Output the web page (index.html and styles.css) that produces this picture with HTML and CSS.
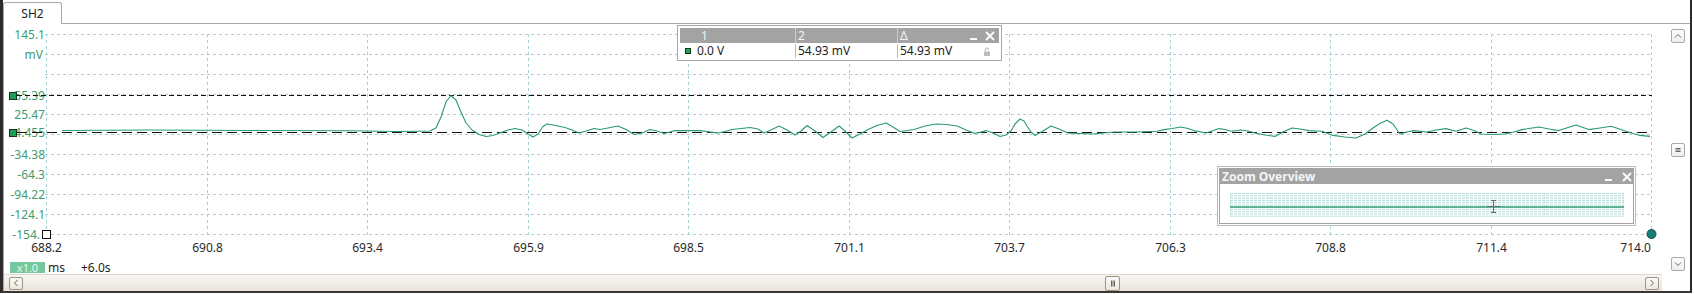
FILE: index.html
```html
<!DOCTYPE html>
<html lang="en">
<head>
    <meta charset="UTF-8">
    <meta name="viewport" content="width=device-width, initial-scale=1.0">
    <title>SH2</title>
    <link rel="stylesheet" href="styles.css">
</head>
<body>
<div class="window">
    <div class="tabs"><div class="tab">SH2</div></div>
    <div class="page">
        <div class="main">
            <div class="plot">
                <svg class="chart" width="1667" height="236" viewBox="4 24 1667 236">
                    <g class="hgrid">
                        <line x1="45" x2="1652" y1="34.5" y2="34.5"/>
                        <line x1="45" x2="1652" y1="54.5" y2="54.5"/>
                        <line x1="45" x2="1652" y1="74.5" y2="74.5"/>
                        <line x1="45" x2="1652" y1="94.5" y2="94.5"/>
                        <line x1="45" x2="1652" y1="114.5" y2="114.5"/>
                        <line x1="45" x2="1652" y1="134.5" y2="134.5"/>
                        <line x1="45" x2="1652" y1="154.5" y2="154.5"/>
                        <line x1="45" x2="1652" y1="174.5" y2="174.5"/>
                        <line x1="45" x2="1652" y1="194.5" y2="194.5"/>
                        <line x1="45" x2="1652" y1="214.5" y2="214.5"/>
                        <line x1="45" x2="1652" y1="234.5" y2="234.5"/>
                    </g>
                    <g class="vgrid">
                        <line x1="46.5" x2="46.5" y1="34" y2="235"/>
                        <line x1="207.5" x2="207.5" y1="34" y2="235"/>
                        <line x1="367.5" x2="367.5" y1="34" y2="235"/>
                        <line x1="528.5" x2="528.5" y1="34" y2="235"/>
                        <line x1="688.5" x2="688.5" y1="34" y2="235"/>
                        <line x1="849.5" x2="849.5" y1="34" y2="235"/>
                        <line x1="1009.5" x2="1009.5" y1="34" y2="235"/>
                        <line x1="1170.5" x2="1170.5" y1="34" y2="235"/>
                        <line x1="1330.5" x2="1330.5" y1="34" y2="235"/>
                        <line x1="1491.5" x2="1491.5" y1="34" y2="235"/>
                        <line x1="1651.5" x2="1651.5" y1="34" y2="235"/>
                    </g>
                    <g class="ylabels">
                        <text x="45" y="39">145.1</text>
                        <text x="43" y="59">mV</text>
                        <text x="45" y="100">55.39</text>
                        <text x="45" y="119">25.47</text>
                        <text x="45" y="137">-4.455</text>
                        <text x="45" y="159">-34.38</text>
                        <text x="45" y="179">-64.3</text>
                        <text x="45" y="199">-94.22</text>
                        <text x="45" y="219">-124.1</text>
                        <text x="40" y="239">-154.</text>
                    </g>
                    <g class="xlabels">
                        <text x="46.5" y="252">688.2</text>
                        <text x="207.5" y="252">690.8</text>
                        <text x="367.5" y="252">693.4</text>
                        <text x="528.5" y="252">695.9</text>
                        <text x="688.5" y="252">698.5</text>
                        <text x="849.5" y="252">701.1</text>
                        <text x="1009.5" y="252">703.7</text>
                        <text x="1170.5" y="252">706.3</text>
                        <text x="1330.5" y="252">708.8</text>
                        <text x="1491.5" y="252">711.4</text>
                        <text class="last" x="1651" y="252">714.0</text>
                    </g>
                    <line class="cursor2" x1="17" x2="1652" y1="95.5" y2="95.5"/>
                    <line class="cursor1" x1="17" x2="1652" y1="132.5" y2="132.5"/>
                    <polyline class="wave" points="62,130.5 150,130 250,130.5 350,130.8 395,131.5 420,131.3 430,131 436,128 441,117 446,102 451,95.5 456,100 461,112 466,123 472,130 479,134.5 486,136.5 493,135.5 501,132.5 508,130 515,128.5 522,130 528,134 533,137 538,134 543,126.5 547,124 553,125 565,127.5 572,130 579,133 586,131 594,128.5 600,129.5 608,128 618,126 626,129.5 634,134.5 642,133 650,129.5 657,131 664,133.5 670,132 675,130.6 700,130.6 710,132 718,133 725,131.5 732,129.5 750,127.5 758,129 764,133 771,130 779,126 787,130 795,135 801,131 807,125.5 815,131 823,137.5 831,132 839,126 845,131 852,138 860,134 868,129.5 877,125.5 886,123 893,127 900,131.5 907,130.5 914,129.5 925,126 936,124 947,124.5 957,126 966,130 975,133.5 981,132 986,130.6 993,133 1000,136.5 1006,135 1011,131 1015,124 1020,119 1024,121 1027,126 1031,132 1035,135.5 1043,131 1051,126 1059,129 1068,133 1080,133.5 1093,134 1114,132 1136,132 1157,131.3 1164,129.6 1172,128.5 1181,127 1188,128.5 1194,130.6 1206,133 1212,131 1219,128.6 1225,129.5 1231,131.3 1241,130 1248,131 1255,133 1265,135 1275,136.4 1283,132 1292,128 1300,129 1309,130.6 1322,131.3 1333,135.4 1345,137 1356,138 1365,134 1373,128 1380,123.5 1387,120.2 1393,124 1400,134 1407,132 1414,130.6 1427,132 1436,130 1446,128.6 1456,131.3 1466,128 1474,130.5 1481,134 1493,134.5 1505,134 1514,132 1522,129.6 1539,127 1549,129 1559,130.6 1568,127.5 1576,124.9 1583,127.5 1589,129.6 1600,128 1611,126.3 1618,128.5 1626,131.3 1633,133.5 1640,135.4 1650,136.4"/>
                    <rect class="marker" x="9.5" y="92.5" width="7" height="7"/>
                    <rect class="marker" x="9.5" y="129.5" width="7" height="7"/>
                    <rect class="origin" x="42.5" y="230.5" width="8" height="8"/>
                    <circle class="end" cx="1651.5" cy="234" r="4.5"/>
                </svg>
                <div class="info">
                    <span class="badge">x1.0</span>
                    <span class="unit">ms</span>
                    <span class="offset">+6.0s</span>
                </div>

                <div class="meas">
                    <div class="meas-head">
                        <span class="c0"></span>
                        <span class="c1">1</span>
                        <span class="c2">2</span>
                        <span class="c3">Δ</span>
                        <span class="ctl">
                            <i class="min"></i>
                            <svg class="close" width="10" height="10" viewBox="0 0 10 10"><path d="M1 1L9 9M9 1L1 9"/></svg>
                        </span>
                    </div>
                    <div class="meas-row">
                        <span class="c0"><i class="swatch"></i></span>
                        <span class="c1">0.0 V</span>
                        <span class="c2">54.93 mV</span>
                        <span class="c3">54.93 mV</span>
                        <span class="ctl">
                            <svg class="lock" width="6" height="9" viewBox="0 0 6 9"><path class="shackle" d="M1.5 4.5V2.5a1.5 1.5 0 0 1 3 0V3"/><rect x="0" y="4.5" width="6" height="4.5"/></svg>
                        </span>
                    </div>
                </div>

                <div class="overview">
                    <div class="ov-frame">
                        <div class="ov-head">
                            <span>Zoom Overview</span>
                            <span class="ctl">
                                <i class="min"></i>
                                <svg class="close" width="10" height="10" viewBox="0 0 10 10"><path d="M1 1L9 9M9 1L1 9"/></svg>
                            </span>
                        </div>
                        <div class="ov-body">
                            <svg class="mini" width="394" height="25" viewBox="0 0 394 25">
                                <g class="mgrid">
                                    <line x1="0" x2="394" y1="0.5" y2="0.5"/>
                                    <line x1="0" x2="394" y1="2.8" y2="2.8"/>
                                    <line x1="0" x2="394" y1="5.1" y2="5.1"/>
                                    <line x1="0" x2="394" y1="7.4" y2="7.4"/>
                                    <line x1="0" x2="394" y1="9.7" y2="9.7"/>
                                    <line x1="0" x2="394" y1="12" y2="12"/>
                                    <line x1="0" x2="394" y1="16.3" y2="16.3"/>
                                    <line x1="0" x2="394" y1="18.6" y2="18.6"/>
                                    <line x1="0" x2="394" y1="20.9" y2="20.9"/>
                                    <line x1="0" x2="394" y1="23.2" y2="23.2"/>
                                </g>
                                <g class="mcols">
                                    <line x1="0.5" x2="0.5" y1="0" y2="24"/>
                                    <line x1="39.8" x2="39.8" y1="0" y2="24"/>
                                    <line x1="118.4" x2="118.4" y1="0" y2="24"/>
                                    <line x1="236.3" x2="236.3" y1="0" y2="24"/>
                                    <line x1="314.9" x2="314.9" y1="0" y2="24"/>
                                    <line x1="393.5" x2="393.5" y1="0" y2="24"/>
                                </g>
                                <line class="mwave" x1="0" x2="394" y1="14" y2="14"/>
                                <path class="move" d="M263.5 7.5v12M261 7.5h5M261 19.5h5M257 13.5h13"/>
                            </svg>
                        </div>
                    </div>
                </div>
            </div>
            <div class="vscroll">
                <div class="vbtn"><svg width="8" height="6" viewBox="0 0 8 6"><path d="M1 4.5L4 1.5L7 4.5"/></svg></div>
                <div class="vbtn"><svg width="8" height="6" viewBox="0 0 8 6"><path d="M1.5 1.5H6.5M1.5 3H6.5M1.5 4.5H6.5"/></svg></div>
                <div class="vbtn"><svg width="8" height="6" viewBox="0 0 8 6"><path d="M1 1.5L4 4.5L7 1.5"/></svg></div>
            </div>
        </div>
        <div class="hscroll">
            <div class="htrack">
                <div class="hbtn"><svg width="6" height="8" viewBox="0 0 6 8"><path d="M4.5 1L1.5 4L4.5 7"/></svg></div>
                <div class="hbtn thumb" style="margin-left: 1082px"><svg width="6" height="7" viewBox="0 0 6 7"><path d="M1.5 0.5V6.5M3 0.5V6.5M4.5 0.5V6.5"/></svg></div>
                <div class="hbtn end"><svg width="6" height="8" viewBox="0 0 6 8"><path d="M1.5 1L4.5 4L1.5 7"/></svg></div>
            </div>
            <div class="corner"></div>
        </div>
    </div>
</div>
</body>
</html>
```

FILE: styles.css
```css
body {
    margin: 0;
    background: #fff;
    font-family: "Noto Sans", "Liberation Sans", sans-serif;
    font-size: 12px;
    color: #1e1e1e;
}
.window {
    width: 1692px;
    height: 293px;
    box-sizing: border-box;
    border-left: 3px solid #2b2b2b;
    border-right: 2px solid #2b2b2b;
    border-bottom: 2px solid #3b3631;
    display: flex;
    flex-direction: column;
}
.tabs {
    height: 24px;
    box-sizing: border-box;
    border-bottom: 1px solid #a9a9a9;
    display: flex;
    align-items: flex-end;
}
.tab {
    width: 59px;
    height: 22px;
    margin-bottom: -1px;
    box-sizing: border-box;
    border: 1px solid #a9a9a9;
    border-bottom: none;
    border-radius: 3px 3px 0 0;
    background: #fff;
    text-align: center;
    line-height: 21px;
}
.page {
    flex: 1;
    display: flex;
    flex-direction: column;
    border-left: 1px solid #a9a9a9;
}
.main {
    height: 250px;
    display: flex;
}
.plot {
    flex: 1;
    position: relative;
    display: flex;
    flex-direction: column;
}
.chart {
    display: block;
}
.chart text {
    font-family: "Noto Sans", "Liberation Sans", sans-serif;
    font-size: 12px;
}
.hgrid line {
    stroke: #b6c9d6;
    stroke-dasharray: 3 3;
}
.vgrid line {
    stroke: #a6d2d9;
    stroke-dasharray: 3 3;
}
.ylabels text {
    fill: #3f9c6e;
    text-anchor: end;
}
.xlabels text {
    fill: #2a2a2a;
    text-anchor: middle;
}
.xlabels .last {
    text-anchor: end;
}
.cursor2 {
    stroke: #111;
    stroke-dasharray: 5 3;
}
.cursor1 {
    stroke: #111;
    stroke-dasharray: 10 5;
}
.wave {
    fill: none;
    stroke: #2a9a72;
    stroke-width: 1.1;
    stroke-linejoin: round;
}
.marker {
    fill: #1f9c55;
    stroke: #12351f;
}
.origin {
    fill: #fff;
    stroke: #111;
}
.end {
    fill: #177c79;
    stroke: #0d4b48;
}
.info {
    height: 14px;
    display: flex;
    align-items: flex-start;
    padding-left: 6px;
    line-height: 13px;
}
.badge {
    width: 35px;
    height: 11px;
    margin-top: 2px;
    background: #74c89e;
    color: #e4f5ec;
    font-size: 11px;
    line-height: 11px;
    text-align: center;
}
.unit {
    margin-left: 3px;
    margin-top: 1px;
}
.offset {
    margin-left: 16px;
    margin-top: 1px;
}

/* measurement table */
.meas {
    position: absolute;
    left: 673px;
    top: 1px;
    width: 325px;
    box-sizing: border-box;
    border: 1px solid #a6a6a6;
    background: #fff;
    padding: 2px 2px 2px;
}
.meas-head,
.meas-row {
    display: grid;
    grid-template-columns: 15px 100px 102px 1fr 32px;
}
.meas-head {
    height: 15px;
    background: #a3a3a3;
    color: #f3f3f3;
    line-height: 15px;
}
.meas-row {
    height: 14px;
    margin-top: 1px;
    line-height: 14px;
}
.c1,
.c2,
.c3 {
    padding-left: 2px;
    white-space: nowrap;
}
.meas-head .c1 {
    padding-left: 6px;
}
.meas-head .c2,
.meas-head .c3 {
    border-left: 1px solid #cdcdcd;
}
.meas-row .c2,
.meas-row .c3 {
    border-left: 1px solid #b9b9b9;
}
.c0 {
    display: flex;
    align-items: center;
    justify-content: center;
}
.swatch {
    width: 4px;
    height: 4px;
    background: #22a35a;
    border: 1px solid #11331e;
}
.ctl {
    display: flex;
    align-items: center;
    justify-content: flex-end;
    padding-right: 4px;
}
.min {
    width: 7px;
    height: 2px;
    margin-top: 7px;
    margin-right: 8px;
    background: #fafafa;
}
.close path {
    stroke: #fafafa;
    stroke-width: 2;
}
.lock {
    margin-right: 5px;
}
.lock rect {
    fill: #bdbdbd;
}
.lock .shackle {
    fill: none;
    stroke: #bdbdbd;
    stroke-width: 1.2;
}

/* zoom overview */
.overview {
    position: absolute;
    left: 1213px;
    top: 142px;
    width: 419px;
    box-sizing: border-box;
    border: 1px solid #bababa;
    padding: 1px;
    background: #fff;
}
.ov-frame {
    border: 1px solid #a3a3a3;
}
.ov-head {
    height: 15px;
    background: #a3a3a3;
    color: #f5f5f5;
    font-weight: bold;
    line-height: 15px;
    display: flex;
    justify-content: space-between;
    padding-left: 2px;
}
.ov-head .ctl {
    padding-right: 1px;
}
.ov-head .min {
    margin-right: 10px;
}
.ov-body {
    height: 39px;
    box-sizing: border-box;
    padding: 9px 0 0 10px;
}
.mini {
    display: block;
}
.mgrid line {
    stroke: #9fd2ce;
    stroke-width: 0.8;
    stroke-dasharray: 3 1;
}
.mcols line {
    stroke: #b5d8dc;
    stroke-width: 0.8;
    stroke-dasharray: 2 2;
}
.mwave {
    stroke: #2a9a72;
    stroke-width: 1.5;
}
.move {
    fill: none;
    stroke: #6e6e6e;
}

/* scroll bars */
.vscroll {
    width: 14px;
    margin-right: 5px;
    padding: 5px 0 3px;
    box-sizing: border-box;
    display: flex;
    flex-direction: column;
    justify-content: space-between;
}
.vbtn {
    height: 14px;
    box-sizing: border-box;
    border: 1px solid #a9a9a9;
    border-radius: 2px;
    background: linear-gradient(#fdfdfd, #efefef);
    display: flex;
    align-items: center;
    justify-content: center;
}
.vbtn path,
.hbtn path {
    fill: none;
    stroke: #666;
}
.hscroll {
    height: 17px;
    display: flex;
}
.htrack {
    flex: 1;
    display: flex;
    align-items: center;
    box-sizing: border-box;
    padding: 0 3px 0 5px;
    border-top: 1px solid #e0dbd1;
    background: linear-gradient(#f8f6f2, #e9e4da);
}
.hbtn {
    width: 14px;
    height: 13px;
    box-sizing: border-box;
    border: 1px solid #9d9487;
    border-radius: 2px;
    background: linear-gradient(#fbfaf7, #ece7de);
    display: flex;
    align-items: center;
    justify-content: center;
}
.thumb {
    width: 15px;
    height: 15px;
}
.end {
    margin-left: auto;
}
.corner {
    width: 28px;
}
```
